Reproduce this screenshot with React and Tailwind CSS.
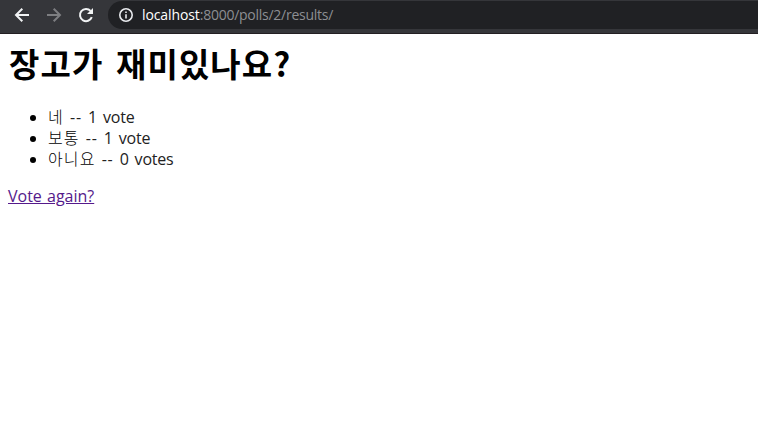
const choices = [
  { id: 1, text: '네', votes: '1 vote' },
  { id: 2, text: '보통', votes: '1 vote' },
  { id: 3, text: '아니요', votes: '0 votes' },
];

function BrowserBar() {
  return (
    <header className="flex h-[34px] items-start border-b border-[#231f22] bg-[#35363a] pt-px">
      <div className="flex h-[28px] w-[108px] shrink-0 items-center gap-[14px] pl-[13px]">
        <svg width="18" height="18" viewBox="0 0 18 18" fill="none" stroke="#f1f3f4" strokeWidth="2">
          <path d="M16 9H3M9.3 2.7L3 9l6.300 6.300" />
        </svg>
        <svg width="18" height="18" viewBox="0 0 18 18" fill="none" stroke="#7d7e81" strokeWidth="2">
          <path d="M2 9h13M8.700 2.700L15 9l-6.300 6.300" />
        </svg>
        <svg width="18" height="18" viewBox="0 0 18 18" fill="none" stroke="#f1f3f4" strokeWidth="2">
          <path d="M14.800 11.200A6.100 6.100 0 1 1 13.600 4.900" />
          <path d="M16 2v6h-6z" fill="#f1f3f4" stroke="none" />
        </svg>
      </div>
      <div className="flex h-[28px] flex-1 items-center rounded-l-full bg-[#202124] pl-[11px]">
        <svg width="14" height="14" viewBox="0 0 14 14" fill="none" stroke="#e8eaed" strokeWidth="1.6">
          <circle cx="7" cy="7" r="6.200" />
          <path d="M7 6.200v4.200M7 3.500v1.500" />
        </svg>
        <p className="ml-[9px] whitespace-nowrap font-['Open_Sans','Noto_Sans',sans-serif] text-[14px] leading-[20px] tracking-[-0.26px] text-[#8d8f93]">
          <span className="tracking-[-0.1px] text-white">localhost</span>:8000/polls/2/results/
        </p>
      </div>
    </header>
  );
}

export default function App() {
  return (
    <div className="min-h-screen bg-white font-['Open_Sans','Noto_Sans_CJK_KR',sans-serif] text-black">
      <BrowserBar />
      <main className="px-2 pt-[8px]">
        <h1 className="pl-px font-['Noto_Sans_CJK_KR',sans-serif] text-[33px] leading-[43px] font-bold tracking-[1.1px] [word-spacing:4px]">
          장고가 재미있나요?
        </h1>
        <ul className="mt-[22px] list-disc pl-10 text-[16px] leading-[21px] [word-spacing:2px] marker:text-black">
          {choices.map((choice) => (
            <li key={choice.id} className="text-[#222222]">
              <span className="font-light tracking-[1.1px] text-black">{choice.text}</span>{' '}
              <span className="tracking-[0.8px]">--</span>{' '}
              <span className="tracking-[-0.2px]">{choice.votes}</span>
            </li>
          ))}
        </ul>
        <a href="#vote" className="mt-4 inline-block text-[16px] leading-[21px] text-[#551a8b] underline [word-spacing:1px]">
          Vote again?
        </a>
      </main>
    </div>
  );
}
